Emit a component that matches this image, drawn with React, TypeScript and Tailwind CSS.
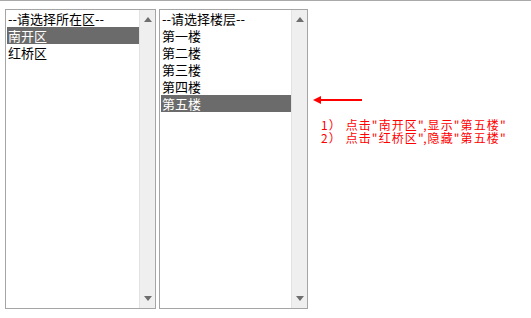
import React from 'react';

const font = "font-['Noto_Sans_CJK_SC','Noto_Sans',sans-serif]";

function ScrollArrow({ down }: { down?: boolean }) {
  return (
    <svg width="8" height="5" viewBox="0 0 8 5" className="block">
      {down ? (
        <polygon points="0,0 8,0 4,5" fill="#6e6e6e" />
      ) : (
        <polygon points="0,5 8,5 4,0" fill="#6e6e6e" />
      )}
    </svg>
  );
}

function ListBox({ items, selected, width }: { items: string[]; selected: number; width: string }) {
  return (
    <div className={`${width} h-[300px] flex border border-[#a5a5a5] bg-white`}>
      <div className="flex-1 pl-px">
        {items.map((item, i) => (
          <div
            key={item}
            className={`h-[17px] leading-[17px] text-[13px] pl-px whitespace-nowrap ${
              i === selected ? 'bg-[#6b6b6b] text-white' : 'text-black'
            }`}
          >
            {item}
          </div>
        ))}
      </div>
      <div className="w-[16px] bg-[#efefef] border-l border-[#e2e2e2] flex flex-col items-center justify-between pt-[7px] pb-[7px]">
        <ScrollArrow />
        <ScrollArrow down />
      </div>
    </div>
  );
}

export default function App() {
  return (
    <div className={`w-[531px] h-[318px] bg-white border-t border-[#a9a9a9] ${font}`}>
      <div className="flex pt-[8px] pl-[5px] gap-[3px]">
        <ListBox items={['--请选择所在区--', '南开区', '红桥区']} selected={1} width="w-[151px]" />
        <ListBox
          items={['--请选择楼层--', '第一楼', '第二楼', '第三楼', '第四楼', '第五楼']}
          selected={5}
          width="w-[149px]"
        />
        <div className="flex flex-col pl-[2px] pt-[87px]">
          <svg width="50" height="8" viewBox="0 0 50 8" className="block">
            <line x1="6" y1="4" x2="49" y2="4" stroke="#ff0000" strokeWidth="2" />
            <polygon points="0,4 8,0 8,8" fill="#ff0000" />
          </svg>
          <div className="pt-[14px] pl-[8px] text-[12px] leading-[13px] tracking-[1.1px] text-[#ff0000] whitespace-nowrap">
            <div>1） 点击"南开区",显示"第五楼"</div>
            <div>2） 点击"红桥区",隐藏"第五楼"</div>
          </div>
        </div>
      </div>
    </div>
  );
}
